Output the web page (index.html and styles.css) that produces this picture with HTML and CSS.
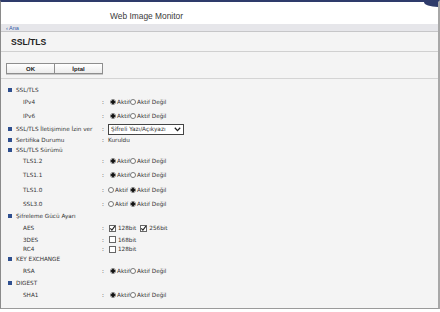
FILE: index.html
```html
<!DOCTYPE html>
<html lang="tr">
<head>
<meta charset="UTF-8">
<title>Web Image Monitor - SSL/TLS</title>
<link rel="stylesheet" href="styles.css">
</head>
<body>
<div class="frame">
  <div class="header">
    <span class="corner"></span>
    <div class="app-title">Web Image Monitor</div>
  </div>
  <div class="crumb"><a href="#">&#8249; Ana</a></div>
  <div class="title-bar"><h1>SSL/TLS</h1></div>
  <div class="btn-bar">
    <button class="btn">OK</button><button class="btn">İptal</button>
  </div>

  <div class="content">
    <div class="sec h10"><span class="sq"></span>SSL/TLS</div>
    <div class="row h14"><span class="lbl">IPv4</span><span class="colon">:</span>
      <span class="rad on"></span>Aktif<span class="rad"></span>Aktif Değil</div>
    <div class="row h14"><span class="lbl">IPv6</span><span class="colon">:</span>
      <span class="rad on"></span>Aktif<span class="rad"></span>Aktif Değil</div>
    <div class="sec h12"><span class="sq"></span><span class="lbl-wide">SSL/TLS İletişimine İzin ver</span><span class="colon">:</span>
      <span class="select">Şifreli Yazı/Açıkyazı
        <svg width="7" height="5" viewBox="0 0 7 5"><path d="M0.8 0.8 L3.5 3.6 L6.2 0.8" fill="none" stroke="#222" stroke-width="1.3"/></svg>
      </span></div>
    <div class="sec h10"><span class="sq"></span><span class="lbl-wide">Sertifika Durumu</span><span class="colon">:</span>Kuruldu</div>
    <div class="sec h9"><span class="sq"></span>SSL/TLS Sürümü</div>
    <div class="row h14"><span class="lbl">TLS1.2</span><span class="colon">:</span>
      <span class="rad on"></span>Aktif<span class="rad"></span>Aktif Değil</div>
    <div class="row h14"><span class="lbl">TLS1.1</span><span class="colon">:</span>
      <span class="rad on"></span>Aktif<span class="rad"></span>Aktif Değil</div>
    <div class="row h15"><span class="lbl">TLS1.0</span><span class="colon">:</span>
      <span class="rad"></span>Aktif<span class="rad on"></span>Aktif Değil</div>
    <div class="row h14"><span class="lbl">SSL3.0</span><span class="colon">:</span>
      <span class="rad"></span>Aktif<span class="rad on"></span>Aktif Değil</div>
    <div class="sec h10"><span class="sq"></span>Şifreleme Gücü Ayarı</div>
    <div class="row h14"><span class="lbl">AES</span><span class="colon">:</span>
      <span class="chk"><svg width="7" height="7" viewBox="0 0 7 7"><path d="M1.3 3.4 L2.9 5.2 L5.9 1.2" fill="none" stroke="#222" stroke-width="1.1"/></svg></span>128bit
      <span class="chk gap"><svg width="7" height="7" viewBox="0 0 7 7"><path d="M1.3 3.4 L2.9 5.2 L5.9 1.2" fill="none" stroke="#222" stroke-width="1.1"/></svg></span>256bit</div>
    <div class="row h9"><span class="lbl">3DES</span><span class="colon">:</span>
      <span class="chk"></span>168bit</div>
    <div class="row h10"><span class="lbl">RC4</span><span class="colon">:</span>
      <span class="chk"></span>128bit</div>
    <div class="sec h10"><span class="sq"></span>KEY EXCHANGE</div>
    <div class="row h14"><span class="lbl">RSA</span><span class="colon">:</span>
      <span class="rad on"></span>Aktif<span class="rad"></span>Aktif Değil</div>
    <div class="sec h10"><span class="sq"></span>DIGEST</div>
    <div class="row h14"><span class="lbl">SHA1</span><span class="colon">:</span>
      <span class="rad on"></span>Aktif<span class="rad"></span>Aktif Değil</div>
  </div>
</div>
</body>
</html>
```
FILE: styles.css
```css
* {
    margin: 0;
    padding: 0;
    box-sizing: border-box;
}
body {
    background: #ffffff;
    font-family: "Liberation Sans", Arial, sans-serif;
    font-size: 7px;
    color: #333;
}
.frame {
    width: 440px;
    height: 309px;
    border-top: 2px solid #2e3b6b;
    border-left: 1px solid #8a8a8a;
    border-right: 2px solid #a8a8a8;
    border-bottom: 1px solid #9a9a9a;
    background: #f4f4f4;
    overflow: hidden;
}
.header {
    position: relative;
    height: 22px;
    background: #ffffff;
    display: flex;
    align-items: center;
    justify-content: center;
    padding-right: 146px;
}
.corner {
    position: absolute;
    right: 0;
    top: 0;
    width: 14px;
    height: 5px;
    background: #2e3b6b;
    border-bottom-left-radius: 14px 5px;
}
.app-title {
    font-size: 8.4px;
    color: #3a3a3a;
    padding-top: 5px;
}
.crumb {
    height: 8px;
    background: #e6e6ea;
    border-bottom: 1px solid #c6c6c8;
    padding-left: 5px;
    line-height: 7px;
}
.crumb a {
    color: #2f56a8;
    font-size: 5.5px;
    text-decoration: none;
}
.title-bar {
    height: 20px;
    border-bottom: 1px solid #d0d0d0;
    display: flex;
    align-items: center;
    padding-left: 10px;
}
.title-bar h1 {
    font-size: 8.6px;
    font-weight: bold;
    color: #222;
}
.btn-bar {
    height: 27px;
    border-bottom: 1px solid #d4d4d4;
    padding: 11px 0 0 5px;
    display: flex;
}
.btn {
    width: 49px;
    height: 11px;
    font-family: "Liberation Sans", Arial, sans-serif;
    font-size: 6px;
    font-weight: bold;
    color: #222;
    background: linear-gradient(#ffffff, #ececec);
    border: 1px solid #8e8e8e;
    box-shadow: 0 1px 0 #c8c8c8;
}
.btn + .btn {
    border-left: 1px solid #8e8e8e;
    margin-left: -1px;
}
.content {
    padding: 6px 0 0 7px;
    font-family: "DejaVu Sans", Verdana, sans-serif;
    font-size: 5.7px;
    color: #333;
}
.sec, .row {
    display: flex;
    align-items: center;
}
.row {
    padding-left: 15px;
}
.h9 { height: 9px; }
.h10 { height: 10px; }
.h12 { height: 12px; }
.h14 { height: 14px; }
.h15 { height: 15px; }
.sq {
    width: 4px;
    height: 4px;
    background: #2f4f8f;
    margin-right: 4px;
}
.lbl {
    width: 79px;
}
.lbl-wide {
    width: 86px;
}
.colon {
    width: 6px;
}
.rad {
    width: 6px;
    height: 6px;
    border: 1px solid #777;
    border-radius: 50%;
    background: #fff;
    margin: 0 1px 0 0;
    display: inline-flex;
}
.rad.on {
    background: radial-gradient(circle, #111 0 1.7px, #fff 2.1px);
    margin-left: 2px;
}
.row .rad:first-of-type {
    margin-left: 2px;
}
.chk {
    width: 7px;
    height: 7px;
    border: 1px solid #666;
    background: #fff;
    margin: 0 2px 0 1px;
    display: inline-flex;
    align-items: center;
    justify-content: center;
}
.chk svg {
    flex: none;
}
.chk.gap {
    margin-left: 4px;
}
.select {
    height: 11px;
    width: 76px;
    border: 1px solid #444;
    background: #fff;
    display: inline-flex;
    align-items: center;
    justify-content: space-between;
    padding: 0 2px;
    font-size: 5.8px;
}
```
